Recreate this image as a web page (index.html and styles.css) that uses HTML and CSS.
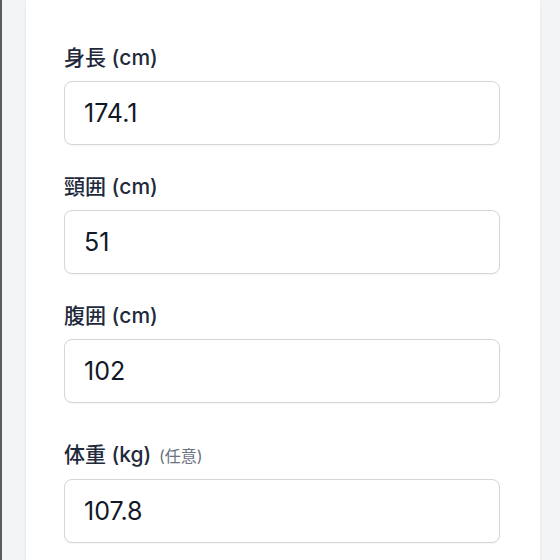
FILE: index.html
```html
<!DOCTYPE html>
<html lang="ja">
<head>
    <meta charset="UTF-8">
    <meta name="viewport" content="width=device-width, initial-scale=1.0">
    <title>体組成の入力</title>
    <link rel="stylesheet" href="styles.css">
</head>
<body>
    <div id="page">
        <form id="card">
            <div class="field">
                <label for="height">身長 (cm)</label>
                <input id="height" type="text" value="174.1">
            </div>
            <div class="field">
                <label for="neck">頸囲 (cm)</label>
                <input id="neck" type="text" value="51">
            </div>
            <div class="field">
                <label for="waist">腹囲 (cm)</label>
                <input id="waist" type="text" value="102">
            </div>
            <div class="field optional">
                <label for="weight">体重 (kg) <span class="hint">(任意)</span></label>
                <input id="weight" type="text" value="107.8">
            </div>
        </form>
    </div>
</body>
</html>
```

FILE: styles.css
```css
html,
body {
    margin: 0;
    padding: 0;
    height: 100%;
    overflow: hidden;
}

body {
    font-family: Inter, "Noto Sans CJK JP", sans-serif;
    background-color: #f3f4f6;
    border-left: 2px solid #5c5c5c;
}

#page {
    padding-left: 24px;
}

#card {
    width: 514px;
    box-sizing: border-box;
    background-color: #fff;
    padding: 44px 40px 40px 38px;
    min-height: 600px;
    box-shadow: 0 1px 3px rgba(0, 0, 0, 0.08);
}

.field {
    margin-bottom: 28px;
}

/* 任意項目は少し離して置く */
.field.optional {
    margin-top: 38px;
}

.field label {
    display: block;
    font-size: 21px;
    line-height: 28px;
    font-weight: 500;
    color: #1f2a3c;
    margin-bottom: 9px;
}

.hint {
    margin-left: 2px;
    font-size: 16px;
    font-weight: 400;
    color: #6b7280;
}

.field input {
    display: block;
    width: 100%;
    height: 64px;
    box-sizing: border-box;
    border: 1px solid #d4d6da;
    border-radius: 8px;
    padding: 0 19px;
    font-family: Inter, "Noto Sans CJK JP", sans-serif;
    font-size: 25px;
    color: #111827;
    background-color: #fff;
    box-shadow: 0 1px 2px rgba(0, 0, 0, 0.04);
}
```
